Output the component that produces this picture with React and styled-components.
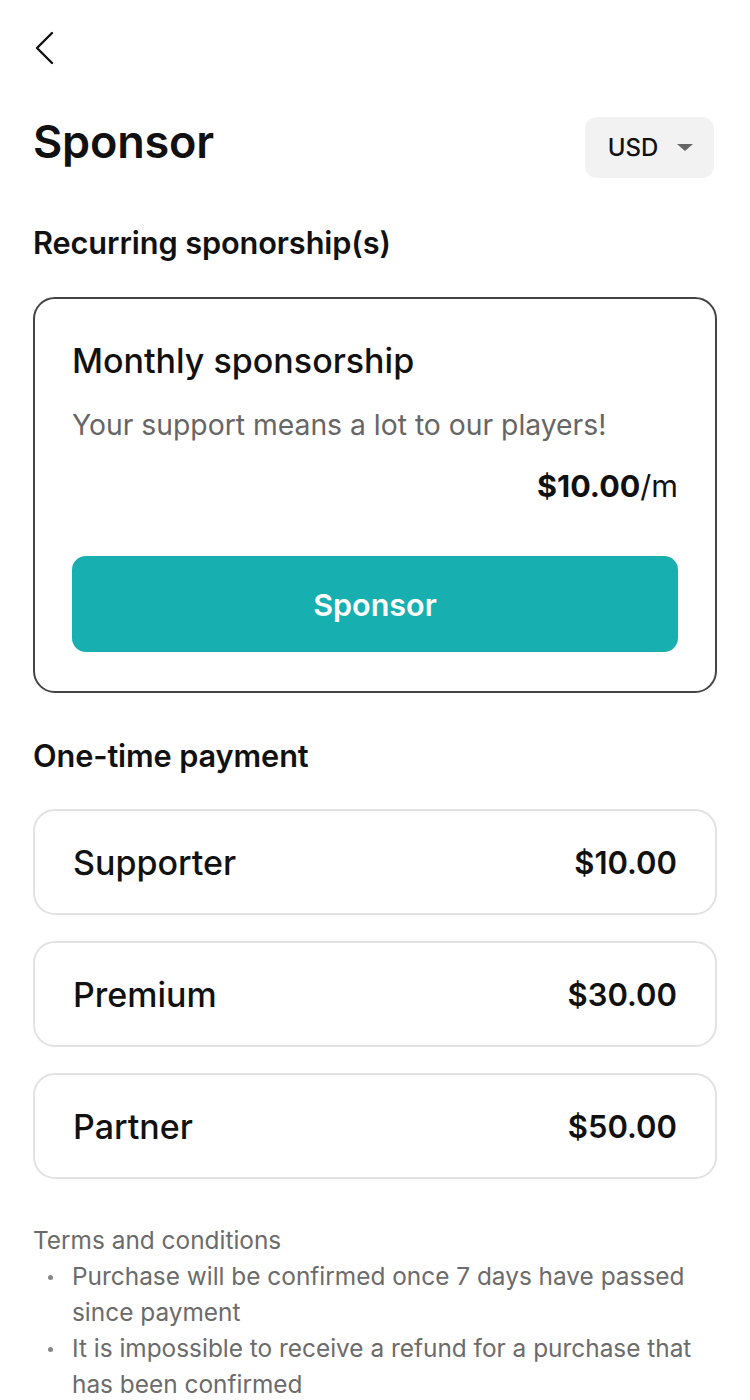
import styled, { createGlobalStyle } from "styled-components";

const GlobalStyle = createGlobalStyle`
  body {
    margin: 0;
    background: #fff;
    font-family: Inter, "Noto Sans", sans-serif;
    color: #111;
  }
`;

const Page = styled.div`
  padding: 0 33px 40px;
  display: flex;
  flex-direction: column;
`;

const TopBar = styled.div`
  height: 95px;
  display: flex;
  align-items: flex-start;
  padding-top: 31px;
  box-sizing: border-box;
`;

const BackButton = styled.button`
  border: none;
  background: none;
  padding: 0;
  margin: 0;
  width: 24px;
  height: 34px;
  display: flex;
  cursor: pointer;
`;

const TitleRow = styled.div`
  display: flex;
  justify-content: space-between;
  align-items: center;
  margin-top: 22px;
`;

const Title = styled.h1`
  margin: 0;
  font-size: 45px;
  font-weight: 600;
  letter-spacing: -0.2px;
  margin-top: -12px;
`;

const CurrencyButton = styled.button`
  width: 129px;
  height: 61px;
  margin-right: 3px;
  border: none;
  border-radius: 12px;
  background: #f2f2f2;
  display: flex;
  align-items: center;
  justify-content: center;
  gap: 19px;
  font-family: inherit;
  font-size: 24px;
  font-weight: 500;
  color: #111;
  padding: 0 0 0 2px;
`;

const Caret = styled.span`
  width: 0;
  height: 0;
  border-left: 8px solid transparent;
  border-right: 8px solid transparent;
  border-top: 7px solid #666;
`;

const SectionTitle = styled.h2`
  margin: ${(p) => p.$top || 0}px 0 0;
  font-size: 30.7px;
  font-weight: 600;
  line-height: 36px;
  letter-spacing: -0.1px;
`;

const RecurringCard = styled.div`
  margin-top: 36px;
  border: 2.5px solid #444;
  border-radius: 22px;
  padding: 40px 37px 39px;
  display: flex;
  flex-direction: column;
`;

const PlanName = styled.div`
  font-size: 34px;
  font-weight: 500;
  line-height: 44px;
`;

const PlanDesc = styled.div`
  margin-top: 22px;
  font-size: 28.3px;
  color: #666;
  line-height: 40px;
`;

const PlanPrice = styled.div`
  margin-top: 21px;
  text-align: right;
  font-size: 30.5px;
  line-height: 40px;
  b {
    font-weight: 700;
  }
`;

const SponsorButton = styled.button`
  margin-top: 50px;
  height: 96px;
  border: none;
  border-radius: 14px;
  background: #18afb1;
  color: #fff;
  font-family: inherit;
  font-size: 30.5px;
  font-weight: 600;
  cursor: pointer;
`;

const TierList = styled.div`
  margin-top: 35px;
  display: flex;
  flex-direction: column;
  gap: 26px;
`;

const TierRow = styled.div`
  height: 106px;
  box-sizing: border-box;
  border: 2px solid #e2e2e2;
  border-radius: 22px;
  padding: 0 38px 0 38px;
  display: flex;
  align-items: center;
  justify-content: space-between;
`;

const TierName = styled.span`
  font-size: 34px;
  font-weight: 500;
`;

const TierPrice = styled.span`
  font-size: 31px;
  font-weight: 600;
`;

const Terms = styled.div`
  margin-top: 43px;
  color: #6b6b6b;
  font-size: 24.4px;
  line-height: 36px;
`;

const TermsList = styled.ul`
  margin: 0;
  padding: 0;
  list-style: none;
`;

const TermsItem = styled.li`
  position: relative;
  padding-left: 39px;
  &::before {
    content: "";
    position: absolute;
    left: 15px;
    top: 17px;
    width: 5px;
    height: 5px;
    border-radius: 50%;
    background: #888;
  }
`;

const terms = [
  "Purchase will be confirmed once 7 days have passed since payment",
  "It is impossible to receive a refund for a purchase that has been confirmed",
];

const tiers = [
  { name: "Supporter", price: "$10.00" },
  { name: "Premium", price: "$30.00" },
  { name: "Partner", price: "$50.00" },
];

export default function App() {
  return (
    <>
      <GlobalStyle />
      <Page>
        <TopBar>
          <BackButton aria-label="Back">
            <svg width="24" height="34" viewBox="0 0 24 34" fill="none">
              <path d="M19 2 L4 17 L19 32" stroke="#111" strokeWidth="2.4" strokeLinecap="round" strokeLinejoin="round" />
            </svg>
          </BackButton>
        </TopBar>
        <TitleRow>
          <Title>Sponsor</Title>
          <CurrencyButton>
            USD
            <Caret />
          </CurrencyButton>
        </TitleRow>

        <SectionTitle $top={47}>Recurring sponorship(s)</SectionTitle>
        <RecurringCard>
          <PlanName>Monthly sponsorship</PlanName>
          <PlanDesc>Your support means a lot to our players!</PlanDesc>
          <PlanPrice>
            <b>$10.00</b>/m
          </PlanPrice>
          <SponsorButton>Sponsor</SponsorButton>
        </RecurringCard>

        <SectionTitle $top={45}>One-time payment</SectionTitle>
        <TierList>
          {tiers.map((t) => (
            <TierRow key={t.name}>
              <TierName>{t.name}</TierName>
              <TierPrice>{t.price}</TierPrice>
            </TierRow>
          ))}
        </TierList>

        <Terms>
          Terms and conditions
          <TermsList>
            {terms.map((t) => (
              <TermsItem key={t}>{t}</TermsItem>
            ))}
          </TermsList>
        </Terms>
      </Page>
    </>
  );
}
